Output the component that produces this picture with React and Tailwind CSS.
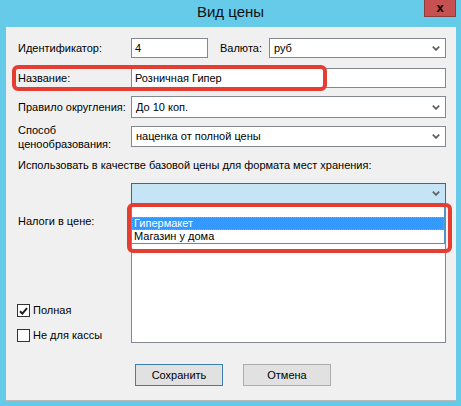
import React from 'react';

// Small combobox arrow
function Chevron() {
  return (
    <svg width="8" height="5" viewBox="0 0 8 5" className="shrink-0">
      <path d="M0.8 0.6 L4 3.9 L7.2 0.6" fill="none" stroke="#5f5f5f" strokeWidth="1.7" />
    </svg>
  );
}

function TextBox({ value, className = '' }) {
  return (
    <div className={`flex items-center h-[20px] border border-[#828790] bg-white pl-[3px] ${className}`}>
      <span>{value}</span>
    </div>
  );
}

function Combo({ value, focused, className = '' }) {
  return (
    <div
      className={`flex items-center justify-between border pl-[4px] pr-[5px] ${
        focused ? 'border-[#2f6c9c] bg-[#c5e5f6]' : 'border-[#828790] bg-white'
      } ${className}`}
    >
      <span>{value}</span>
      <Chevron />
    </div>
  );
}

function CheckRow({ checked, label, className = '' }) {
  return (
    <div className={`flex items-center gap-[3px] -ml-px h-[13px] ${className}`}>
      <span className="w-[13px] h-[13px] border border-[#333] bg-white flex items-center justify-center">
        {checked && (
          <svg width="9" height="8" viewBox="0 0 9 8">
            <path d="M1 4.2 L3.4 6.6 L8 1.2" fill="none" stroke="#1e1e1e" strokeWidth="2" />
          </svg>
        )}
      </span>
      <span>{label}</span>
    </div>
  );
}

export default function App() {
  return (
    <div className="w-[461px] h-[406px] bg-[#65cbe9] flex flex-col font-['Liberation_Sans',Arial,sans-serif] text-[11px] leading-[13px] text-black">
      {/* title bar */}
      <div className="relative h-[27px] shrink-0 flex justify-center">
        <span className="text-[15px] leading-[24px] text-[#111]">Вид цены</span>
        <div className="absolute right-[5px] top-0 w-[32px] h-[17px] bg-[#c75050] border-l border-b border-r border-[#8f3a3a] flex items-center justify-center">
          <span className="font-bold text-[13px] leading-[13px] -mt-[2px]">x</span>
        </div>
      </div>

      {/* client area */}
      <div className="ml-[6px] w-[450px] h-[374px] bg-[#f0f0f0] border-b border-[#b8b8b8] pl-[12px] pr-[10px] pt-[11px] flex flex-col">
        <div className="flex items-center h-[20px]">
          <span className="w-[113px] shrink-0">Идентификатор:</span>
          <TextBox value="4" className="w-[77px]" />
          <span className="ml-[12px] w-[49px] shrink-0">Валюта:</span>
          <Combo value="руб" className="flex-1 h-[20px] pl-[2px]" />
        </div>

        <div className="relative flex items-center h-[20px] mt-[10px]">
          <span className="w-[113px] shrink-0">Название:</span>
          <TextBox value="Розничная Гипер" className="flex-1 pl-[2px]" />
          <div className="absolute left-[-6px] top-[-3px] w-[315px] h-[26px] border-[4px] border-[#e53d31] rounded-[6px]" />
        </div>

        <div className="flex items-center h-[22px] mt-[8px]">
          <span className="w-[113px] shrink-0">Правило округления:</span>
          <Combo value="До 10 коп." className="flex-1 h-[22px]" />
        </div>

        <div className="flex items-center h-[21px] mt-[8px]">
          <span className="w-[113px] shrink-0 leading-[14px]">
            Способ
            <br />
            ценообразования:
          </span>
          <Combo value="наценка от полной цены" className="flex-1 h-[21px]" />
        </div>

        <div className="mt-[12px]">Использовать в качестве базовой цены для формата мест хранения:</div>

        <div className="flex mt-[11px]">
          <div className="w-[113px] shrink-0 flex flex-col">
            <span className="mt-[32px]">Налоги в цене:</span>
            <CheckRow checked label="Полная" className="mt-[76px]" />
            <CheckRow label="Не для кассы" className="mt-[12px]" />
          </div>

          <div className="flex-1 flex flex-col">
            <div className="relative">
              <Combo value="" focused className="h-[21px]" />

              {/* open drop-down list */}
              <div className="absolute left-0 right-px top-[21px] z-10 bg-white border-l border-r border-b border-[#4b93c2] flex flex-col">
                <div className="h-[13px]" />
                <div className="h-[13px] bg-[#3399ff] text-white border border-dotted border-[#e0953a] pl-[1px] leading-[11px]">
                  Гипермакет
                </div>
                <div className="h-[13px] pl-[2px]">Магазин у дома</div>
              </div>

              <div className="absolute left-[-4px] right-[-6px] top-[20px] h-[50px] z-20 border-[4px] border-[#e53d31] rounded-[6px]" />
            </div>

            <div className="h-[139px] border border-[#828790] bg-white" />
          </div>
        </div>

        <div className="flex gap-[20px] mt-[21px] pl-[117px]">
          <button className="w-[88px] h-[22px] border border-[#3c7fb1] bg-[#e1e1e1]">Сохранить</button>
          <button className="w-[88px] h-[22px] border border-[#adadad] bg-[#e1e1e1]">Отмена</button>
        </div>
      </div>
    </div>
  );
}
